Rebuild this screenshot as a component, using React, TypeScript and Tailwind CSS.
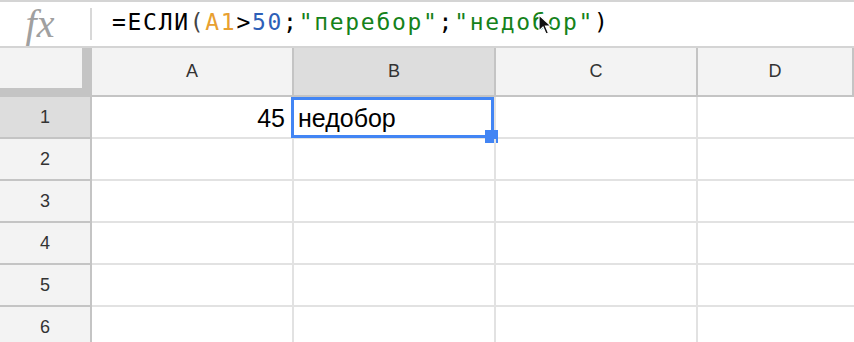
import React from 'react'

const cols = ['A', 'B', 'C', 'D']
const rows = [1, 2, 3, 4, 5, 6]

const Cursor = () => (
  <svg className="absolute left-[538px] top-[12px]" width="16" height="22" viewBox="0 0 16 22">
    <path d="M1 1 L1 17 L5 13 L8 20 L10.5 19 L7.5 12 L13 12 Z" fill="#111" stroke="#fff" strokeWidth="1.2" />
  </svg>
)

const FormulaBar = () => (
  <div className="relative flex h-[48px] items-center border-t-2 border-b-2 border-[#d4d4d4] bg-white">
    <div className="flex h-full w-[90px] items-center justify-center">
      <span className="ml-[-6px] pr-[4px] text-[40px] leading-[44px] italic text-[#a0a0a0] [font-family:'Liberation_Serif',serif]">fx</span>
    </div>
    <div className="h-[32px] w-[2px] bg-[#d8d8d8]" />
    <div className="ml-[20px] mt-[-3px] text-[23px] tracking-[1.7px] text-black [font-family:'DejaVu_Sans_Mono',monospace]">
      <span>=ЕСЛИ</span>
      <span className="text-[#444]">(</span>
      <span className="text-[#e8a030]">A1</span>
      <span>&gt;</span>
      <span className="text-[#2d5fb8]">50</span>
      <span>;</span>
      <span className="text-[#15821a]">"перебор"</span>
      <span>;</span>
      <span className="text-[#15821a]">"недобор"</span>
      <span>)</span>
    </div>
    <Cursor />
  </div>
)

const HeaderRow = () => (
  <div className="flex h-[49px] text-[18px] text-[#333] [font-family:'Liberation_Sans',Arial,sans-serif]">
    <div className="w-[92px] shrink-0 border-r-2 border-[#c4c4c4] bg-[#f3f3f3]">
      <div className="h-full w-full border-r-[8px] border-b-[9px] border-[#c4c4c4]" />
    </div>
    {cols.map((c) => (
      <div
        key={c}
        className={`flex items-center justify-center border-b-2 border-r-2 border-[#c4c4c4] ${
          c === 'D' ? 'flex-1' : 'w-[202px] shrink-0'
        } ${c === 'B' ? 'bg-[#dddddd]' : 'bg-[#f3f3f3]'}`}
      >
        {c}
      </div>
    ))}
  </div>
)

const Row = ({ n }: { n: number }) => (
  <div className="flex h-[42px] [font-family:'Liberation_Sans',Arial,sans-serif]">
    <div
      className={`flex w-[92px] shrink-0 items-center justify-center border-r-2 border-b-2 border-[#c4c4c4] text-[18px] text-[#333] ${
        n === 1 ? 'bg-[#dddddd]' : 'bg-[#f3f3f3]'
      }`}
    >
      {n}
    </div>
    <div className="flex w-[202px] shrink-0 items-center justify-end border-r-2 border-b-2 border-[#e2e2e2] pr-[7px] pt-[3px] text-[25px] text-black">
      {n === 1 ? '45' : ''}
    </div>
    <div className="relative flex w-[202px] shrink-0 items-center border-r-2 border-b-2 border-[#e2e2e2] pl-[4px] pt-[3px] text-[25px] text-black">
      {n === 1 && (
        <>
          недобор
          <div className="absolute -left-[3px] top-0 right-0 -bottom-[1px] border-[3px] border-[#4285f4]" />
          <div className="absolute -right-[4px] -bottom-[6px] h-[13px] w-[13px] bg-[#4285f4]" />
        </>
      )}
    </div>
    <div className="w-[202px] shrink-0 border-r-2 border-b-2 border-[#e2e2e2]" />
    <div className="flex-1 border-b-2 border-[#e2e2e2]" />
  </div>
)

export default function App() {
  return (
    <div className="h-[342px] w-[854px] overflow-hidden bg-white">
      <FormulaBar />
      <HeaderRow />
      {rows.map((n) => (
        <Row key={n} n={n} />
      ))}
    </div>
  )
}
